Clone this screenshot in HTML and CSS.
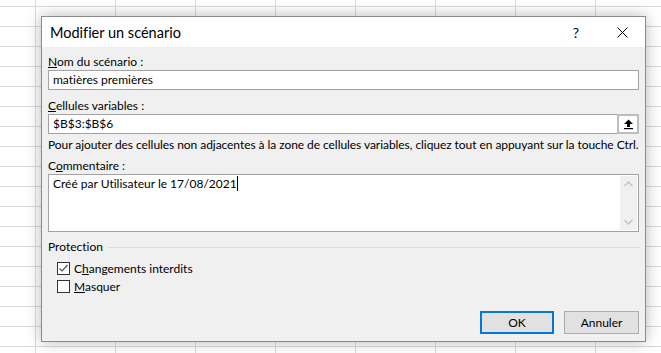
FILE: index.html
```html
<!DOCTYPE html>
<html lang="fr">
<head>
    <meta charset="UTF-8">
    <title>Modifier un scénario</title>
    <link rel="stylesheet" href="styles.css">
</head>
<body>
    <div class="dialog">
        <div class="titlebar">
            <span class="title">Modifier un scénario</span>
            <span class="caption-btn help">?</span>
            <span class="caption-btn close">
                <svg width="11" height="11" viewBox="0 0 11 11"><path d="M0.5 0.5 L10.5 10.5 M10.5 0.5 L0.5 10.5" stroke="#000" stroke-width="1" fill="none"/></svg>
            </span>
        </div>
        <div class="content">
            <div class="label"><u>N</u>om du scénario :</div>
            <div class="field">matières premières</div>

            <div class="label gap"><u>C</u>ellules variables :</div>
            <div class="field ref">
                <span class="field-text">$B$3:$B$6</span>
                <span class="ref-btn">
                    <svg width="11" height="11" viewBox="0 0 11 11"><path d="M5.5 0.5 L10 5 L7 5 L7 8 L4 8 L4 5 L1 5 Z" fill="#000"/><rect x="1" y="9" width="9" height="1.2" fill="#000"/></svg>
                </span>
            </div>
            <div class="hint">Pour ajouter des cellules non adjacentes à la zone de cellules variables, cliquez tout en appuyant sur la touche Ctrl.</div>

            <div class="label gap-sm">C<u>o</u>mmentaire :</div>
            <div class="memo">
                <div class="memo-text">Créé par Utilisateur le 17/08/2021<span class="caret"></span></div>
                <div class="scrollbar">
                    <svg width="9" height="6" viewBox="0 0 9 6"><path d="M0.5 5 L4.5 1 L8.5 5" stroke="#c2c2c2" stroke-width="1.4" fill="none"/></svg>
                    <svg width="9" height="6" viewBox="0 0 9 6"><path d="M0.5 1 L4.5 5 L8.5 1" stroke="#c2c2c2" stroke-width="1.4" fill="none"/></svg>
                </div>
            </div>

            <div class="group">
                <span>Protection</span>
                <span class="group-line"></span>
            </div>
            <div class="checks">
                <div class="check-row">
                    <span class="box">
                        <svg width="11" height="11" viewBox="0 0 11 11"><path d="M1.5 5.5 L4 8 L9.5 2" stroke="#555" stroke-width="1.2" fill="none"/></svg>
                    </span>
                    <span>C<u>h</u>angements interdits</span>
                </div>
                <div class="check-row">
                    <span class="box"></span>
                    <span><u>M</u>asquer</span>
                </div>
            </div>

            <div class="buttons">
                <span class="btn default">OK</span>
                <span class="btn">Annuler</span>
            </div>
        </div>
    </div>
</body>
</html>
```

FILE: styles.css
```css
body { margin: 0; height: 353px; overflow: hidden; font-family: Lato, "Noto Sans", sans-serif; font-size: 12px; color: #000; font-variant-ligatures: none;
    background-color: #fff;
    background-image: linear-gradient(to right, #dadada 1px, transparent 1px), linear-gradient(to bottom, #dadada 1px, transparent 1px);
    background-size: 80px 20px; background-position: 35px 6px; }
.dialog { box-sizing: border-box; width: 605px; height: 326px; margin: 16px 0 0 41px; border: 1px solid #8a8a8a; background: #f0f0f0; box-shadow: 0 0 14px rgba(0, 0, 0, 0.28); display: flex; flex-direction: column; }
.titlebar { height: 30px; background: #fff; display: flex; align-items: center; }
.title { flex: 1; padding-left: 8px; font-size: 14.5px; }
.caption-btn { width: 46px; height: 30px; display: flex; align-items: center; justify-content: center; }
.help { font-size: 14px; }
.content { flex: 1; padding: 7px 6px 7px 6px; display: flex; flex-direction: column; }
.label { line-height: 16px; height: 16px; }
.gap { margin-top: 8px; }
.gap-sm { margin-top: 5px; }
.field { box-sizing: border-box; height: 20px; line-height: 18px; padding: 0 4px; background: #fff; border: 1px solid #a3a3a3; }
.ref { display: flex; padding-right: 0; }
.field-text { flex: 1; }
.ref-btn { box-sizing: border-box; width: 22px; height: 20px; margin: -1px -1px 0 0; border: 2px solid #bdbdbd; background: #fff; display: flex; align-items: center; justify-content: center; }
.hint { margin-top: 3px; line-height: 16px; white-space: nowrap; letter-spacing: -0.06px; }
.memo { box-sizing: border-box; height: 58px; background: #fff; border: 1px solid #a3a3a3; display: flex; padding: 1px 1px 1px 0; }
.memo-text { flex: 1; padding-left: 4px; line-height: 16px; }
.caret { display: inline-block; width: 1px; height: 15px; background: #000; vertical-align: -3px; }
.scrollbar { width: 17px; background: #f0f0f0; display: flex; flex-direction: column; justify-content: space-between; align-items: center; padding: 5px 0; box-sizing: border-box; }
.group { margin-top: 7px; line-height: 16px; display: flex; align-items: center; gap: 5px; }
.group-line { flex: 1; height: 1px; background: #dcdcdc; margin-right: -1px; }
.checks { margin-top: 4px; }
.check-row { height: 18px; display: flex; align-items: center; padding-left: 9px; gap: 4px; }
.box { box-sizing: border-box; width: 13px; height: 13px; border: 1px solid #333; background: #fff; display: flex; align-items: center; justify-content: center; }
.buttons { margin-top: auto; display: flex; justify-content: flex-end; gap: 10px; }
.btn { box-sizing: border-box; width: 75px; height: 23px; background: #e1e1e1; border: 1px solid #adadad; display: flex; align-items: center; justify-content: center; }
.btn.default { width: 74px; border: 2px solid #0078d7; }
```
